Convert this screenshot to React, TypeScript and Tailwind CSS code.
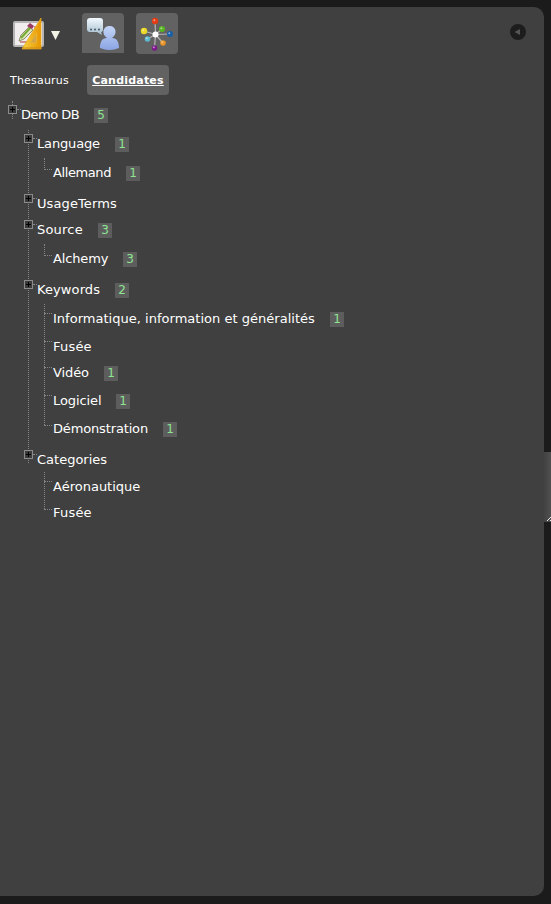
import React from "react";

type Term = { label: string; width: string; height: string; count?: number };
type Branch = Term & { children: Term[]; guide: string };

const branches: Branch[] = [
  {
    label: "Language", width: "w-[63px] tracking-[-0.15px]", height: "h-[29px]", count: 1, guide: "h-[12px]",
    children: [{ label: "Allemand", width: "w-[58px] tracking-[-0.4px]", height: "h-[31px]", count: 1 }],
  },
  { label: "UsageTerms", width: "w-[80px] tracking-[0.1px]", height: "h-[26px]", guide: "", children: [] },
  {
    label: "Source", width: "w-[46px] tracking-[0.2px]", height: "h-[29px]", count: 3, guide: "h-[12px]",
    children: [{ label: "Alchemy", width: "w-[55px] tracking-[-0.15px]", height: "h-[31px]", count: 3 }],
  },
  {
    label: "Keywords", width: "w-[63px] tracking-[0.1px]", height: "h-[29px]", count: 2, guide: "h-[121px]",
    children: [
      { label: "Informatique, information et généralités", width: "w-[262px] tracking-[0.02px]", height: "h-[28px]", count: 1 },
      { label: "Fusée", width: "w-[39px] tracking-[0.2px]", height: "h-[26px]" },
      { label: "Vidéo", width: "w-[36px] tracking-[-0.1px]", height: "h-[28px]", count: 1 },
      { label: "Logiciel", width: "w-[48px] tracking-[-0.1px]", height: "h-[28px]", count: 1 },
      { label: "Démonstration", width: "w-[95px] tracking-[-0.15px]", height: "h-[31px]", count: 1 },
    ],
  },
  {
    label: "Categories", width: "w-[70px]", height: "h-[27px]", guide: "h-[37px]",
    children: [
      { label: "Aéronautique", width: "w-[87px]", height: "h-[26px]" },
      { label: "Fusée", width: "w-[39px] tracking-[0.2px]", height: "h-[26px]" },
    ],
  },
];

function Row({ term, expandable = false, last = false }: { term: Term; expandable?: boolean; last?: boolean }) {
  return (
    <div className={`relative flex items-start pl-[13px] ${term.height}`}>
      {expandable ? (
        <>
          <svg className="absolute left-0 top-[4px]" width="9" height="9" shapeRendering="crispEdges">
            <path fill="#8b8b8b" d="M0 0h9v9H0z" />
            <path fill="#3b3b3b" d="M1 1h7v7H1z" />
            <path fill="#000" d="M2 4h5v1H2zM4 2h1v5H4z" />
          </svg>
          <span className="absolute left-[9px] top-[8px] w-[4px] border-t border-dotted border-[#858585]" />
        </>
      ) : (
        <span className={`absolute left-[4px] w-[8px] border-t border-dotted border-[#858585] ${last ? "top-[10px]" : "top-[8px]"}`} />
      )}
      <span className={`mt-px whitespace-nowrap leading-[26px] ${term.width}`}>{term.label}</span>
      {term.count !== undefined && (
        <span className="ml-[15px] mt-[7px] h-[15px] w-[14px] bg-[#5d5d5d] text-center text-[12px] leading-[15px] text-[#8de592]">
          {term.count}
        </span>
      )}
    </div>
  );
}

function SketchIcon() {
  return (
    <svg width="34" height="34" viewBox="0 0 34 34">
      <defs>
        <linearGradient id="ruler" x1="0" x2="1"><stop stopColor="#f8d343" /><stop offset="1" stopColor="#e89600" /></linearGradient>
      </defs>
      <rect x="2" y="5" width="29" height="24" rx="1" fill="#f1edef" stroke="#b5b5b5" strokeWidth="2" />
      <path d="M7 24l2-6 8-8 4 3-9 9z" fill="#dfe8bd" stroke="#77784f" strokeWidth=".8" />
      <path d="M9 21L19 10" stroke="#78a934" strokeWidth="2" />
      <path d="M15 9l3-3 4 3-2 3z" fill="#9b3a62" />
      <path d="M8 25h10l5-8V9" fill="none" stroke="#bd756d" strokeWidth="1.5" />
      <path d="M29 1v31H10z" fill="url(#ruler)" stroke="#e9a91d" strokeWidth=".7" />
      <path d="M24.5 16v10H18z" fill="#d6a548" stroke="#efb72e" strokeWidth=".7" />
      <path d="M10 31h20" stroke="#cf8b16" />
    </svg>
  );
}

function ChatIcon() {
  return (
    <svg width="42" height="41" viewBox="0 0 42 41">
      <defs>
        <linearGradient id="person" x1="0" y1="0" x2="0" y2="1"><stop stopColor="#c4d5f6" /><stop offset="1" stopColor="#8ba5e4" /></linearGradient>
        <linearGradient id="speech" x1="0" y1="0" x2="0" y2="1"><stop stopColor="#f3faff" /><stop offset="1" stopColor="#a5bdcd" /></linearGradient>
      </defs>
      <path d="M8 5h10q3 0 3 3v8q0 3-2 3l1 3-5-3H8q-3 0-3-3V8q0-3 3-3z" fill="url(#speech)" />
      <g fill="#40566a"><circle cx="9" cy="16.5" r="1" /><circle cx="13" cy="16.5" r="1" /><circle cx="17" cy="16.5" r="1" /></g>
      <path d="M18 35c0-6 2-10 7-10-6-4-4-12 2.5-12s8.500 8 2.500 12c5 0 7 4 7 10q-9.500 4-19 0z" fill="url(#person)" />
    </svg>
  );
}

const nodes = [
  [19, 8, 3.2, "#e33b13"], [26, 16, 3, "#58b522"], [34, 21, 3, "#185da8"],
  [27, 30, 2.8, "#e99425"], [18.5, 35, 2.7, "#7c198b"], [11.5, 26, 2.8, "#5db7cf"], [8, 18, 3.2, "#ecd927"],
] as const;

function NetworkIcon() {
  return (
    <svg width="42" height="41" viewBox="0 0 42 41">
      <g stroke="#b5b5b5" strokeWidth="1.2">{nodes.map(([x, y]) => <line key={x} x1="19.5" y1="21.5" x2={x} y2={y} />)}</g>
      {nodes.map(([x, y, r, fill]) => (
        <g key={x}><circle cx={x} cy={y} r={r} fill={fill} /><circle cx={x - 0.7} cy={y - 0.7} r="1" fill="#fff" opacity=".5" /></g>
      ))}
      <circle cx="19.5" cy="21.5" r="3" fill="#fff" />
    </svg>
  );
}

export default function App() {
  return (
    <main className="flex h-[904px] w-[551px] bg-[#1b1b1b] pb-[8px] pt-[7px] font-['DejaVu_Sans',sans-serif] text-[13px] text-white">
      <section className="flex w-[544px] flex-col rounded-r-[10px] bg-[#404040]">
        <header className="flex h-[58px] items-start pl-[12px] pt-[6px]">
          <div className="mt-[4px] flex h-[34px] items-center">
            <SketchIcon />
            <svg className="ml-[5px] mt-[3px]" width="9" height="9"><path d="M0 0h9L4.5 9z" fill="#f3f3e5" /></svg>
          </div>
          <button className="ml-[22px] h-[40px] w-[42px] overflow-hidden rounded-t-[4px] bg-[#626262]"><ChatIcon /></button>
          <button className="ml-[12px] h-[41px] w-[42px] rounded-[4px] bg-[#626262]"><NetworkIcon /></button>
          <svg className="ml-auto mr-[18px] mt-[11px]" width="16" height="16">
            <circle cx="8" cy="8" r="8" fill="#1d1d1d" /><path d="M4.500 8L10 5v6z" fill="#555" />
          </svg>
        </header>
        <nav className="flex h-[30px] items-center pl-[10px] text-[11px] tracking-[0.2px]">
          <span className="w-[77px] whitespace-nowrap pt-[2px]">Thesaurus</span>
          <span className="flex h-[30px] w-[82px] items-center justify-center rounded-[4px] bg-[#626262] pt-[2px] font-bold underline">Candidates</span>
        </nav>
        <div className="relative pl-[8px] pt-[6px]">
          <span className="absolute left-[12px] top-[6px] h-[18px] border-l border-dotted border-[#858585]" />
          <Row term={{ label: "Demo DB", width: "w-[58px] tracking-[-0.5px]", height: "h-[29px]", count: 5 }} expandable />
          <div className="relative pl-[16px]">
            <span className="absolute left-[20px] top-0 h-[333px] border-l border-dotted border-[#858585]" />
            {branches.map((branch) => (
              <div key={branch.label}>
                <Row term={branch} expandable />
                {branch.children.length > 0 && (
                  <div className="relative pl-[16px]">
                    <span className={`absolute left-[20px] top-[-1px] border-l border-dotted border-[#858585] ${branch.guide}`} />
                    {branch.children.map((term, index) => (
                      <Row key={term.label} term={term} last={index === branch.children.length - 1} />
                    ))}
                  </div>
                )}
              </div>
            ))}
          </div>
        </div>
      </section>
      <aside className="mt-[445px] flex h-[70px] w-[7px] items-end bg-linear-to-r from-[#424242] to-[#505050]">
        <svg width="7" height="8" shapeRendering="crispEdges"><path d="M2 7h1V6h1V5h1V4h1V3h1v1H6v1H5v1H4v1zM5 7h1V6h1v1z" fill="#eee" /></svg>
      </aside>
    </main>
  );
}
